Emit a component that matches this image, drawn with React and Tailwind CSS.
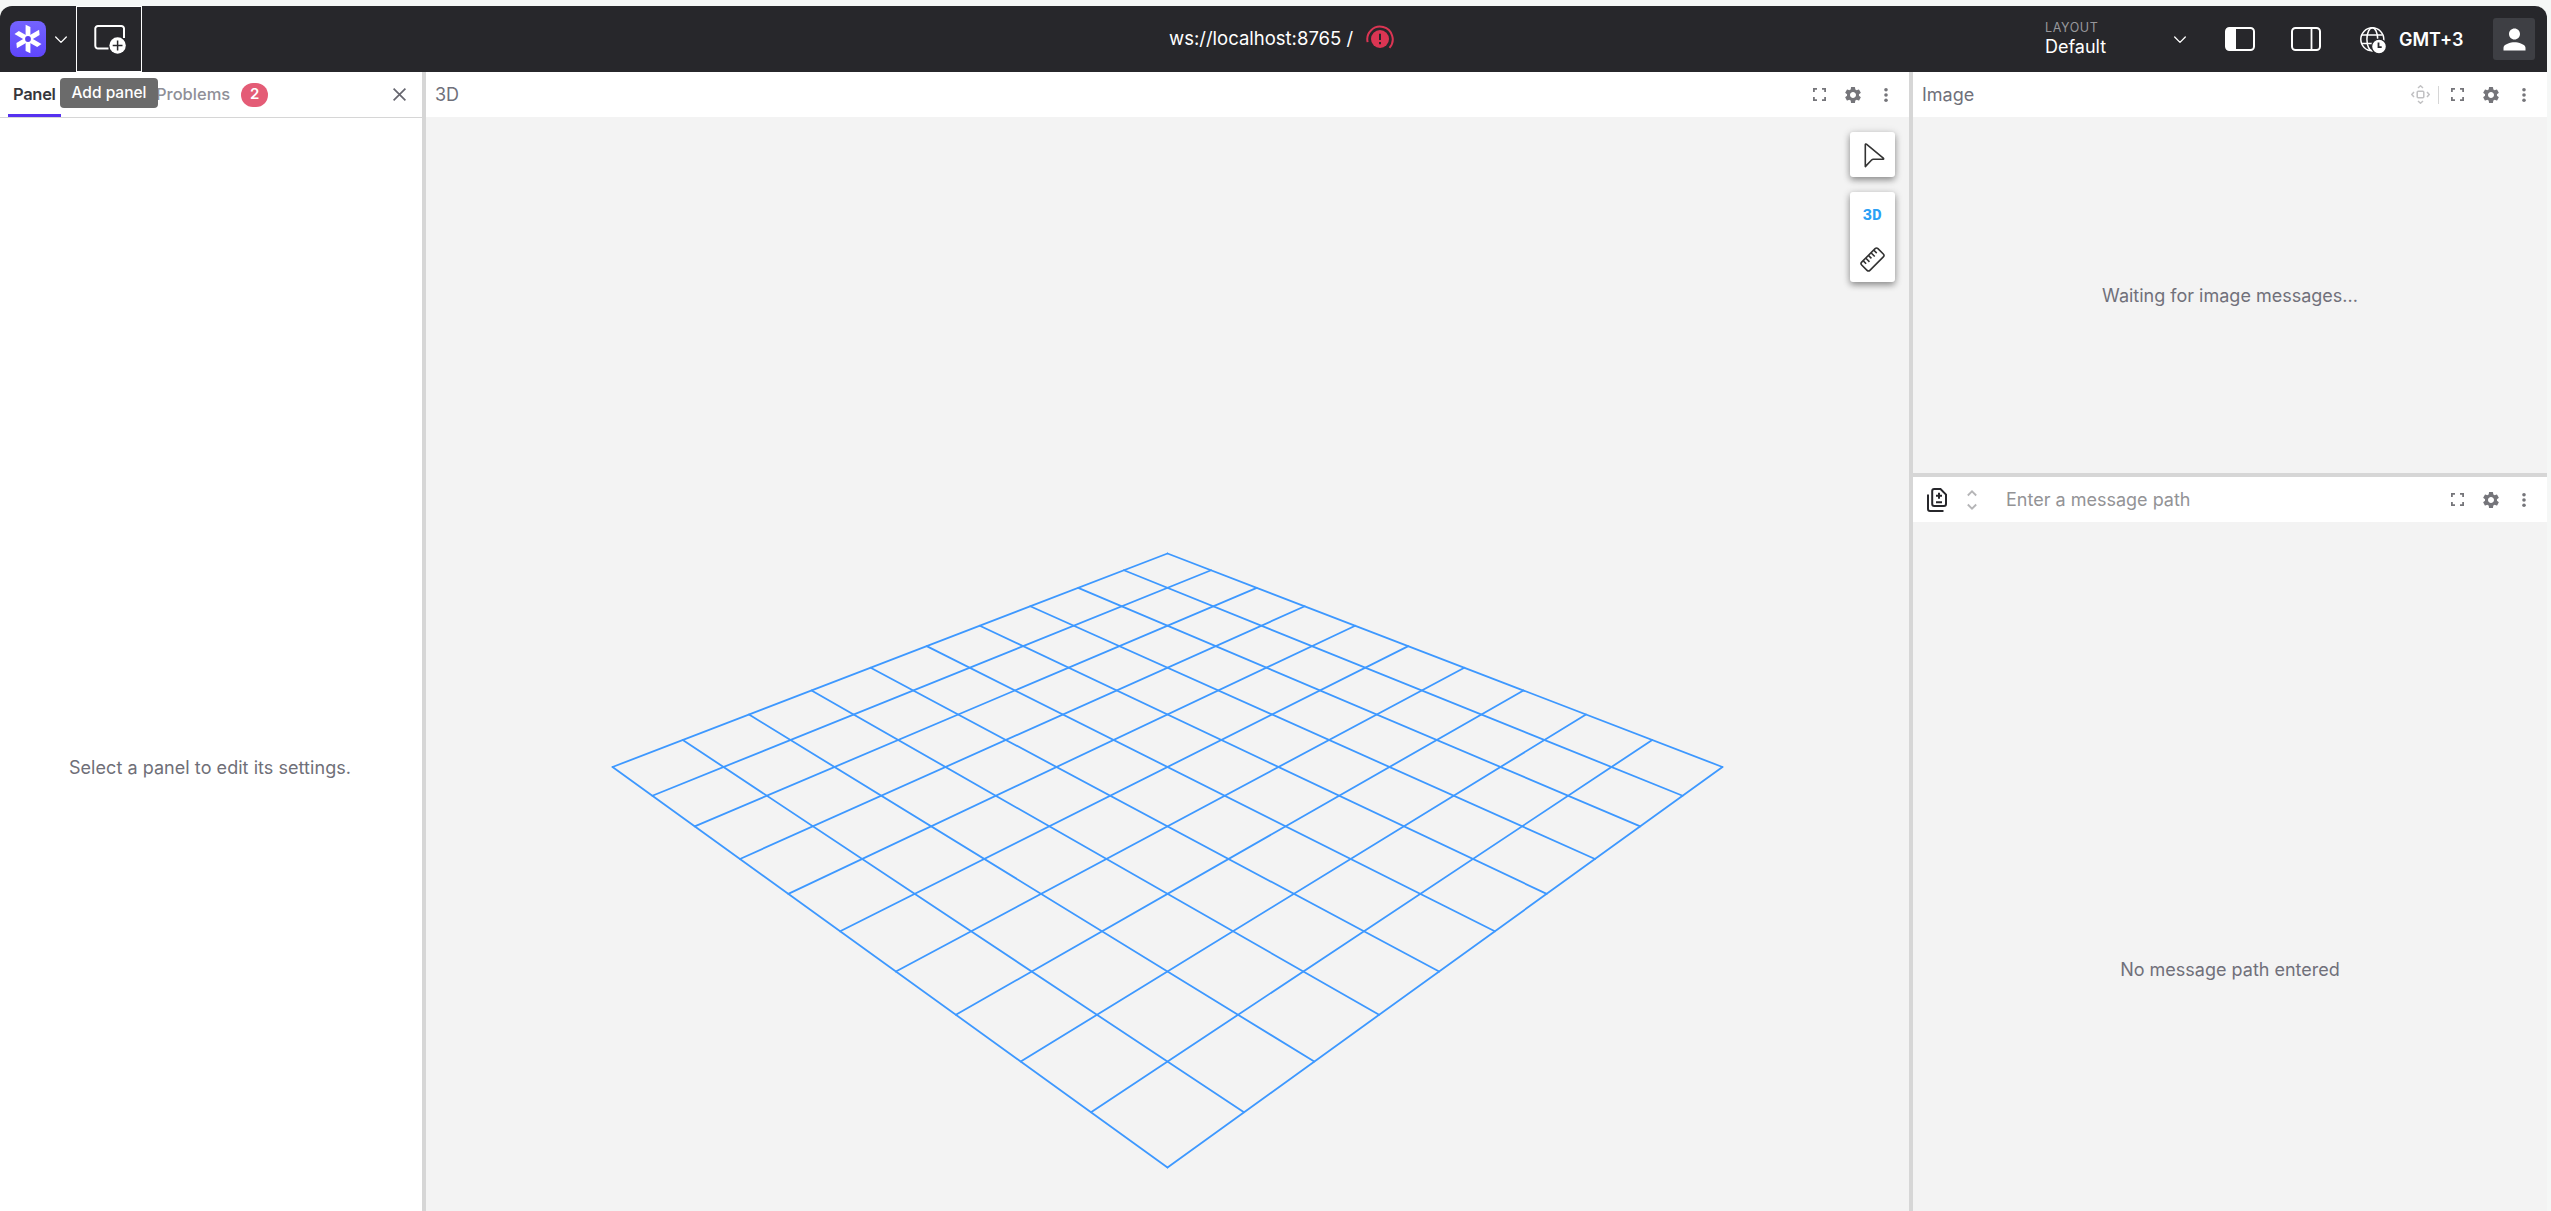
import React from "react";
import { MdSettings, MdPerson } from "react-icons/md";

// Perspective projection of a 10x10 floor grid, seen along its diagonal.
const GRID_LINES = (() => {
  const project = (u, v) => {
    const s = u + v;
    const w = 1 - 0.23346 * s;
    return [741.5 + ((u - v) * 425.4) / w, (436.5 + s * 61.75) / w];
  };
  const lines = [];
  for (let i = 0; i <= 10; i++) {
    const t = i / 10;
    lines.push([...project(t, 0), ...project(t, 1)]);
    lines.push([...project(0, t), ...project(1, t)]);
  }
  return lines;
})();

function Chevron({ className }) {
  return (
    <svg className={className} width="12" height="8" viewBox="0 0 12 8" fill="none" stroke="currentColor" strokeWidth="1.3" strokeLinecap="round" strokeLinejoin="round">
      <path d="M.7 1 6 6.4 11.3 1" />
    </svg>
  );
}

function PanelActions() {
  return (
    <div className="flex items-center text-[#75757a]">
      <div className="w-[33px] flex justify-center">
        <svg width="13" height="13" viewBox="0 0 13 13" fill="none" stroke="currentColor" strokeWidth="1.8">
          <path d="M.9 4V.9H4M9 .9h3.1V4M12.1 9v3.1H9M4 12.1H.9V9" />
        </svg>
      </div>
      <div className="w-[33px] flex justify-center"><MdSettings size={20} /></div>
      <div className="w-[33px] flex justify-center">
        <svg width="4" height="14" viewBox="0 0 4 14" fill="currentColor">
          <circle cx="2" cy="1.8" r="1.8" /><circle cx="2" cy="7" r="1.8" /><circle cx="2" cy="12.2" r="1.8" />
        </svg>
      </div>
    </div>
  );
}

function Logo() {
  return (
    <div className="w-9 h-9 rounded-lg bg-linear-to-b from-[#7463ff] to-[#5f45fb]">
      <svg width="36" height="36" viewBox="0 0 36 36" fill="#fff">
        {[0, 60, 120, 180, 240, 300].map((a) => (
          <path key={a} transform={`rotate(${a} 18 18)`} d="M15.6 16.2V3.8L20.4 6V16.2Z" />
        ))}
        <circle cx="18" cy="18" r="4.5" />
        <circle cx="18" cy="18" r="2.9" fill="#5a41f0" />
      </svg>
    </div>
  );
}

function TopBar() {
  return (
    <header className="h-[66px] shrink-0 bg-[#27272b] rounded-t-[12px] flex items-center text-white">
      <div className="flex items-center h-full w-[1169px]">
        <div className="ml-[10px]"><Logo /></div>
        <Chevron className="ml-[9px] mt-[2px]" />
        <button className="ml-[9px] h-[66px] w-[66px] border border-white flex items-center pl-[17px]">
          <svg width="33" height="30" viewBox="0 0 33 30" fill="none">
            <path d="M14.5 24.5H4a2.7 2.7 0 0 1-2.7-2.7V4.6A2.7 2.7 0 0 1 4 1.9h23.3A2.7 2.7 0 0 1 30 4.6V14" stroke="#fff" strokeWidth="2" />
            <circle cx="23.6" cy="21.5" r="8.2" fill="#fff" />
            <path d="M23.6 16.6v9.8M18.7 21.5h9.8" stroke="#27272b" strokeWidth="1.5" />
          </svg>
        </button>
      </div>
      <div className="flex items-center text-[18.5px]">
        <span className="w-[183px] whitespace-nowrap">ws://localhost:8765&nbsp;/</span>
        <svg className="ml-[14px] mt-[-2px]" width="28" height="26" viewBox="0 0 28 26" fill="none">
          <path d="M1.6 17.1A12.7 12.7 0 1 1 23.5 22.8" stroke="#db3553" strokeWidth="2" />
          <circle cx="14" cy="14" r="9" fill="#db3553" />
          <path d="M14 8.7v6.2M14 17v2.2" stroke="#27272b" strokeWidth="2" />
        </svg>
      </div>
      <div className="w-[502px] ml-auto flex items-center h-full">
        <div className="w-[129px]">
          <div className="text-[12.5px] leading-[14px] tracking-[.6px] text-[#97979b] mt-[2px]">LAYOUT</div>
          <div className="text-[18px] leading-[24px]">Default</div>
        </div>
        <Chevron className="mt-[2px]" />
        <svg className="ml-[39px]" width="30" height="24" viewBox="0 0 30 24" fill="none">
          <rect x="1" y="1" width="28" height="22" rx="3.5" stroke="#fff" strokeWidth="2" /><path d="M1 4a3 3 0 0 1 3-3h7v22H4a3 3 0 0 1-3-3Z" fill="#fff" />
        </svg>
        <svg className="ml-[36px]" width="30" height="24" viewBox="0 0 30 24" fill="none" stroke="#fff">
          <rect x="1" y="1" width="28" height="22" rx="3.5" strokeWidth="2" /><path d="M20.5 1v22" strokeWidth="1.8" />
        </svg>
        <svg className="ml-[39px] mt-[2px]" width="26" height="27" viewBox="0 0 26 27" fill="none" stroke="#fff" strokeWidth="1.5">
          <circle cx="12.3" cy="12.3" r="11.5" /><ellipse cx="12.3" cy="12.3" rx="5.4" ry="11.5" /><path d="M2 8h20.6M2 16.6h20.6" />
          <circle cx="19" cy="19.5" r="7.4" fill="#fff" stroke="#27272b" strokeWidth="1.2" />
          <path d="M18.5 15.5v4.6h3.2" stroke="#27272b" strokeWidth="1.8" />
        </svg>
        <span className="ml-[13px] w-[94px] text-[18px] font-semibold">GMT+3</span>
        <div className="w-[42px] h-[42px] rounded-[3px] bg-[#3e3f44] flex items-center justify-center"><MdPerson size={33} /></div>
      </div>
    </header>
  );
}

function Sidebar() {
  return (
    <aside className="w-[422px] shrink-0 flex flex-col bg-white">
      <div className="h-[46px] shrink-0 border-b border-[#d6d6d6] flex items-center pl-2 relative">
        <div className="h-[45px] w-[53px] border-b-[3px] border-[#5631f0] text-[16.5px] font-semibold tracking-[-.3px] text-[#37373c] pl-[5px] pt-[2px] flex items-center">Panel</div>
        <div className="ml-[95px] text-[16.5px] font-medium text-[#8f8f98]">Problems</div>
        <div className="ml-[11px] w-[27px] h-6 rounded-full bg-[#e45c76] text-white text-[15px] font-semibold flex items-center justify-center">2</div>
        <svg className="ml-auto mr-[16px]" width="13" height="13" viewBox="0 0 13 13" stroke="#66666f" strokeWidth="1.7"><path d="M.6.6l11.8 11.8M12.4.6.6 12.4" /></svg>
        <div className="absolute left-[60px] top-[6px] w-[98px] h-[30px] rounded-[4px] bg-[#6b6b6b] text-white text-[15.5px] font-medium flex items-center justify-center">Add panel</div>
      </div>
      <div className="flex-1 flex items-center justify-center text-[18px] tracking-[.05px] text-[#6f6f78] pt-[206px] pr-[2px]">Select a panel to edit its settings.</div>
    </aside>
  );
}

function ScenePanel() {
  return (
    <section className="w-[1483px] shrink-0 flex flex-col">
      <div className="h-[45px] shrink-0 bg-white flex items-center justify-between pl-[9px] pr-[7px] text-[18px] text-[#70707a]"><span>3D</span><PanelActions /></div>
      <div className="flex-1 bg-[#f3f3f3] relative overflow-hidden">
        <svg className="block w-full h-full" viewBox="0 0 1483 1094" preserveAspectRatio="xMinYMin slice" stroke="#3d98ff" strokeWidth="1.8" strokeLinecap="round">
          {GRID_LINES.map(([x1, y1, x2, y2], i) => <line key={i} x1={x1} y1={y1} x2={x2} y2={y2} />)}
        </svg>
        <div className="absolute right-[14px] top-[15px] flex flex-col gap-[15px]">
          <div className="w-[45px] h-[45px] rounded-[3px] bg-white shadow-[0_3px_6px_rgba(0,0,0,.35),0_1px_10px_rgba(0,0,0,.14)] flex items-center justify-center">
            <svg className="ml-[3px] mt-[2px]" width="21" height="26" viewBox="0 0 21 26" fill="none" stroke="#333" strokeWidth="1.6" strokeLinejoin="round"><path d="M1.3 1.6v22l6.3-6.6q.7-.7 1.7-.7h9.8q1-.4.2-1.2L2.4 1.2Q1.4.6 1.3 1.6Z" /></svg>
          </div>
          <div className="w-[45px] h-[90px] rounded-[3px] bg-white shadow-[0_3px_6px_rgba(0,0,0,.35),0_1px_10px_rgba(0,0,0,.14)] flex flex-col items-center">
            <div className="h-[45px] pt-[2px] pr-px flex items-center text-[16px] font-bold text-[#2ba0f5] font-['Liberation_Mono',monospace]">3D</div>
            <div className="h-[45px] flex items-center">
              <svg width="25" height="25" viewBox="0 0 25 25" fill="none" stroke="#333" strokeWidth="1.6">
                <g transform="rotate(-45 12.5 12.5)"><rect x="1" y="6.7" width="23" height="11.6" rx="2" /><path d="M5 7v4M8.7 7v5M12.5 7v4M16.2 7v5M20 7v4" /></g>
              </svg>
            </div>
          </div>
        </div>
      </div>
    </section>
  );
}

function ImagePanel() {
  return (
    <section className="h-[405px] shrink-0 flex flex-col border-b-4 border-[#d6d6d6]">
      <div className="h-[45px] shrink-0 bg-white flex items-center pl-[9px] pr-[7px]">
        <span className="text-[18px] text-[#70707a] mr-auto">Image</span>
        <svg width="19" height="19" viewBox="0 0 19 19" fill="none" stroke="#c1c1c3" strokeWidth="1.5">
          <rect x="6.2" y="6.2" width="6.6" height="6.6" rx="1" /><path d="M7 3l2.5-2.2L12 3M7 16l2.5 2.2L12 16M3 7 .8 9.5 3 12M16 7l2.2 2.5L16 12" />
        </svg>
        <div className="ml-[8px] mr-[2px] w-px h-[18px] bg-[#d6d6d6]" />
        <PanelActions />
      </div>
      <div className="flex-1 bg-[#f3f3f3] flex items-center justify-center text-[18px] text-[#70707a]">Waiting for image messages...</div>
    </section>
  );
}

function MessagePanel() {
  return (
    <section className="flex-1 flex flex-col">
      <div className="h-[45px] shrink-0 bg-white flex items-center pl-[14px] pr-[7px]">
        <svg width="20" height="24" viewBox="0 0 20 24" fill="none" stroke="#27272b" strokeWidth="2">
          <path d="M1 6.5V21a2 2 0 0 0 2 2h13.5M5.2 3a2 2 0 0 1 2-2h6.3L19 6.6V16a2 2 0 0 1-2 2H7.2a2 2 0 0 1-2-2ZM9 14.2h6M9 7.7h6M12 4.7v6" />
        </svg>
        <svg className="ml-[20px]" width="10" height="20" viewBox="0 0 10 20" fill="none" stroke="#b5b5b7" strokeWidth="1.8"><path d="M.8 5.5 5 1.3l4.2 4.2M.8 14.5 5 18.7l4.2-4.2" /></svg>
        <span className="ml-[29px] mr-auto text-[18px] text-[#939396]">Enter a message path</span>
        <PanelActions />
      </div>
      <div className="flex-1 bg-[#f3f3f3] flex items-center justify-center pt-[205px] text-[18px] text-[#70707a]">No message path entered</div>
    </section>
  );
}

export default function App() {
  return (
    <div className="w-[2551px] h-[1211px] bg-[#f5f7f6] pt-[6px] pr-[4px] flex flex-col overflow-hidden font-['Inter',sans-serif]">
      <TopBar />
      <main className="flex flex-1 min-h-0">
        <Sidebar />
        <div className="w-[4px] shrink-0 bg-[#d6d6d6]" />
        <ScenePanel />
        <div className="w-[4px] shrink-0 bg-[#d6d6d6]" />
        <div className="flex-1 flex flex-col min-w-0"><ImagePanel /><MessagePanel /></div>
      </main>
    </div>
  );
}
